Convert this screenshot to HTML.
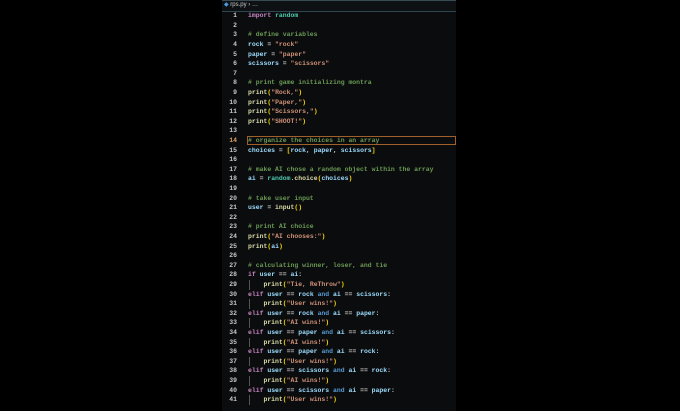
<!DOCTYPE html>
<html><head><meta charset="utf-8"><style>
html,body{margin:0;padding:0;background:#000;width:680px;height:411px;overflow:hidden}
#ed{position:absolute;left:222px;top:0;width:234px;height:411px;background:#0b0c0d}
#hdr{position:absolute;left:222px;top:0;width:234px;height:10px;border-top:1px solid #3a4a55;border-bottom:1px solid #2f4550;background:#0d1114;font:6px "Liberation Sans",sans-serif;color:#ccc;line-height:9px}
.l{position:absolute;left:222px;width:234px;height:9.6px;line-height:9.6px;font:bold 6.45px/9.6px "Liberation Mono",monospace;white-space:pre;color:#d4d4d4}
.n{position:absolute;left:0;width:15px;text-align:right;color:#c8c8c8}
.c{position:absolute;left:26px}
.k{color:#c586c0}.a{color:#569cd6}.v{color:#9cdcfe}.s{color:#ce9178}.g{color:#6a9955}.f{color:#dcdcaa}.t{color:#4ec9b0}.b{color:#ffd700}.p{color:#da70d6}
.ig{position:absolute;left:27px;top:0;width:1px;height:9.6px;background:#555}
#box{position:absolute;left:247px;top:136px;width:209px;height:9px;border:1px solid #a0602a;box-sizing:border-box}
</style></head><body>
<div id="ed"></div>
<div id="hdr"><span style="color:#4a9be0;margin-left:2px">◆</span> rps.py › …</div>
<div id="box"></div>
<div id="code"></div>
<script>
var L=[
'<span class="k">import</span> <span class="t">random</span>',
'',
'<span class="g"># define variables</span>',
'<span class="v">rock</span> = <span class="s">"rock"</span>',
'<span class="v">paper</span> = <span class="s">"paper"</span>',
'<span class="v">scissors</span> = <span class="s">"scissors"</span>',
'',
'<span class="g"># print game initializing montra</span>',
'<span class="f">print</span><span class="b">(</span><span class="s">"Rock,"</span><span class="b">)</span>',
'<span class="f">print</span><span class="b">(</span><span class="s">"Paper,"</span><span class="b">)</span>',
'<span class="f">print</span><span class="b">(</span><span class="s">"Scissors,"</span><span class="b">)</span>',
'<span class="f">print</span><span class="b">(</span><span class="s">"SHOOT!"</span><span class="b">)</span>',
'',
'<span class="g"># organize the choices in an array</span>',
'<span class="v">choices</span> = <span class="b">[</span><span class="v">rock</span>, <span class="v">paper</span>, <span class="v">scissors</span><span class="b">]</span>',
'',
'<span class="g"># make AI chose a random object within the array</span>',
'<span class="v">ai</span> = <span class="t">random</span>.<span class="f">choice</span><span class="b">(</span><span class="v">choices</span><span class="b">)</span>',
'',
'<span class="g"># take user input</span>',
'<span class="v">user</span> = <span class="f">input</span><span class="b">()</span>',
'',
'<span class="g"># print AI choice</span>',
'<span class="f">print</span><span class="b">(</span><span class="s">"AI chooses:"</span><span class="b">)</span>',
'<span class="f">print</span><span class="b">(</span><span class="v">ai</span><span class="b">)</span>',
'',
'<span class="g"># calculating winner, loser, and tie</span>',
'<span class="k">if</span> <span class="v">user</span> == <span class="v">ai</span>:',
'I<span class="f">print</span><span class="b">(</span><span class="s">"Tie, ReThrow"</span><span class="b">)</span>',
'<span class="k">elif</span> <span class="v">user</span> == <span class="v">rock</span> <span class="a">and</span> <span class="v">ai</span> == <span class="v">scissors</span>:',
'I<span class="f">print</span><span class="b">(</span><span class="s">"User wins!"</span><span class="b">)</span>',
'<span class="k">elif</span> <span class="v">user</span> == <span class="v">rock</span> <span class="a">and</span> <span class="v">ai</span> == <span class="v">paper</span>:',
'I<span class="f">print</span><span class="b">(</span><span class="s">"AI wins!"</span><span class="b">)</span>',
'<span class="k">elif</span> <span class="v">user</span> == <span class="v">paper</span> <span class="a">and</span> <span class="v">ai</span> == <span class="v">scissors</span>:',
'I<span class="f">print</span><span class="b">(</span><span class="s">"AI wins!"</span><span class="b">)</span>',
'<span class="k">elif</span> <span class="v">user</span> == <span class="v">paper</span> <span class="a">and</span> <span class="v">ai</span> == <span class="v">rock</span>:',
'I<span class="f">print</span><span class="b">(</span><span class="s">"User wins!"</span><span class="b">)</span>',
'<span class="k">elif</span> <span class="v">user</span> == <span class="v">scissors</span> <span class="a">and</span> <span class="v">ai</span> == <span class="v">rock</span>:',
'I<span class="f">print</span><span class="b">(</span><span class="s">"AI wins!"</span><span class="b">)</span>',
'<span class="k">elif</span> <span class="v">user</span> == <span class="v">scissors</span> <span class="a">and</span> <span class="v">ai</span> == <span class="v">paper</span>:',
'I<span class="f">print</span><span class="b">(</span><span class="s">"User wins!"</span><span class="b">)</span>'
];
var h='';
for(var i=0;i<L.length;i++){
 var s=L[i],ind='';
 if(s.charAt(0)=='I'){s='    '+s.slice(1);ind='<div class="ig"></div>';}
 var nc=(i==13)?' style="color:#e0a060"':'';
 h+='<div class="l" style="top:'+(11.2+i*9.6).toFixed(1)+'px"><span class="n"'+nc+'>'+(i+1)+'</span>'+ind+'<span class="c">'+s+'</span></div>';
}
document.getElementById('code').innerHTML=h;
</script>
</body></html>
